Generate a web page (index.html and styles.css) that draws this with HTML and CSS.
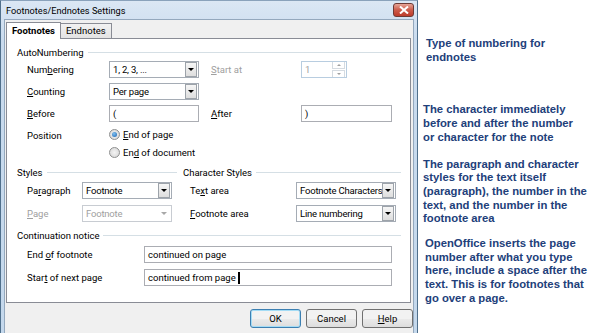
FILE: index.html
```html
<!DOCTYPE html>
<html lang="en">
<head>
  <meta charset="UTF-8">
  <title>Footnotes/Endnotes Settings</title>
  <link rel="stylesheet" href="styles.css">
</head>
<body>
<div class="page">
  <div class="window">
    <div class="titlebar">
      <span class="title">Footnotes/Endnotes Settings</span>
      <span class="close">
        <svg width="10" height="8" viewBox="0 0 10 8"><path d="M1 0.5 L9 7.5 M9 0.5 L1 7.5" stroke="#fff" stroke-width="2"/></svg>
      </span>
    </div>
    <div class="client">
      <div class="tabs">
        <div class="tab active">Footnotes</div>
        <div class="tab">Endnotes</div>
      </div>
      <div class="panel">
        <div class="legend">AutoNumbering</div>
        <div class="grid auto">
          <label>Num<u>b</u>ering</label>
          <div class="select"><span>1, 2, 3, ...</span><i class="btn"></i></div>
          <span></span>
          <label class="off"><u>S</u>tart at</label>
          <div class="spin"><span>1</span><i class="arrows"><b class="up"></b><b class="down"></b></i></div>

          <label><u>C</u>ounting</label>
          <div class="select"><span>Per page</span><i class="btn"></i></div>
          <span></span><span></span><span></span>

          <label><u>B</u>efore</label>
          <div class="input">(</div>
          <span></span>
          <label><u>A</u>fter</label>
          <div class="input">)</div>
        </div>
        <div class="radios">
          <label>Position</label>
          <div class="radio-list">
            <div class="radio on"><i></i><span><u>E</u>nd of page</span></div>
            <div class="radio"><i></i><span>En<u>d</u> of document</span></div>
          </div>
        </div>

        <div class="legend-row">
          <div class="legend styles">Styles</div>
          <div class="legend chars">Character Styles</div>
        </div>
        <div class="grid style">
          <label>Pa<u>r</u>agraph</label>
          <div class="select"><span>Footnote</span><i class="btn"></i></div>
          <span></span>
          <label>Te<u>x</u>t area</label>
          <div class="select"><span>Footnote Characters</span><i class="btn"></i></div>

          <label class="off"><u>P</u>age</label>
          <div class="select off"><span>Footnote</span><i class="btn"></i></div>
          <span></span>
          <label><u>F</u>ootnote area</label>
          <div class="select"><span>Line numbering</span><i class="btn"></i></div>
        </div>

        <div class="legend cont">Continuation notice</div>
        <div class="grid notice">
          <label>End <u>o</u>f footnote</label>
          <div class="input">continued on page</div>
          <label>Star<u>t</u> of next page</label>
          <div class="input"><span>continued from page&nbsp;</span><b class="caret"></b></div>
        </div>
      </div>
      <div class="buttons">
        <button class="default">OK</button>
        <button>Cancel</button>
        <button><u>H</u>elp</button>
      </div>
    </div>
  </div>

  <div class="notes">
    <p class="n1">Type of numbering for endnotes</p>
    <p class="n2">The character immediately before and after the number or character for the note</p>
    <p class="n3">The paragraph and character styles for the text itself (paragraph), the number in the text, and the number in the footnote area</p>
    <p class="n4">OpenOffice inserts the page number after what you type here, include a space after the text. This is for footnotes that go over a page.</p>
  </div>
</div>
</body>
</html>
```

FILE: styles.css
```css
body { margin: 0; background: #fff; font-family: Roboto, 'Noto Sans', sans-serif; font-size: 9.5px; color: #000; }
.page { display: flex; width: 600px; height: 333px; overflow: hidden; }

/* dialog window */
.window { width: 418px; height: 340px; box-sizing: border-box; border: 1px solid #50708c; border-top-color: #8aa2bb; background: linear-gradient(#dbe7f4, #c9dbee 40px, #c4d8ec); padding: 0 3px; flex: none; }
.titlebar { height: 18px; display: flex; align-items: center; padding-left: 2px; }
.title { flex: 1; font-size: 9.2px; }
.close { width: 19px; height: 12px; margin-top: -1px; border: 1px solid #6d3a35; border-radius: 3px; background: linear-gradient(#e7a597, #cc5b4a 50%, #bd3b2a); display: flex; align-items: center; justify-content: center; }
.client { background: #f0f0f0; border: 1px solid #94a8bd; height: 330px; box-sizing: border-box; padding: 1px 0 0 1px; }

/* tabs */
.tabs { display: flex; align-items: flex-end; height: 17px; }
.tab { height: 14px; line-height: 13px; padding: 0 5px; border: 1px solid #898c95; border-bottom: none; border-left: none; background: linear-gradient(#f2f2f2, #e3e3e3); }
.tab.active { height: 16px; line-height: 15px; padding: 0 5px; border-left: 1px solid #898c95; background: #fff; font-weight: bold; position: relative; top: 1px; }
.panel { width: 405px; height: 265px; box-sizing: border-box; background: #fff; border: 1px solid #898c95; padding: 6px 9px 0 10px; }

/* group titles */
.legend { display: flex; align-items: center; height: 14px; }
.legend::after { content: ""; flex: 1; border-top: 1px solid #d5dfe5; margin-left: 4px; }
.legend-row { display: flex; margin-top: 6px; }
.legend.styles { width: 160px; }
.legend.chars { flex: 1; margin-left: 6px; }
.legend.cont { margin-top: 6px; }

/* control grids */
.grid { display: grid; align-items: center; padding-left: 10px; }
.grid label, .radios label { white-space: nowrap; }
.grid.auto { grid-template-columns: 82px 90px 12px 90px 91px; grid-template-rows: 17px 17px 17px; row-gap: 5px; margin-top: 2px; }
.grid.style { grid-template-columns: 55px 90px 18px 106px 100px; grid-template-rows: 17px 17px; row-gap: 6px; margin-top: 3px; }
.grid.notice { grid-template-columns: 117px 248px; grid-template-rows: 17px 17px; row-gap: 6px; margin-top: 4px; }
.off { color: #a0a0a0; }

.select, .input, .spin { height: 17px; box-sizing: border-box; border: 1px solid #a5acb5; background: #fff; display: flex; align-items: center; padding-left: 3px; white-space: nowrap; overflow: hidden; }
.select span { flex: 1; min-width: 0; overflow: hidden; letter-spacing: -0.2px; }
.select .btn { width: 10px; height: 13px; margin-right: 1px; border: 1px solid #9da3aa; background: linear-gradient(#f6f6f6, #dedede); display: flex; align-items: center; justify-content: center; flex: none; }
.select .btn::after { content: ""; border: 3px solid transparent; border-top: 3px solid #000; border-bottom: none; }
.select.off { border-color: #c8ccd2; }
.select.off .btn { border-color: #fff; background: #fff; }
.select.off .btn::after { border-top-color: #a8a8a8; }
.input { border-color: #abadb3; }
.caret { display: inline-block; width: 2px; height: 12px; background: #000; }

.spin { border-color: #b8cde0; color: #a0a0a0; width: 46px; padding-right: 1px; }
.spin span { flex: 1; }
.spin .arrows { display: flex; flex-direction: column; gap: 1px; }
.spin .arrows b { width: 11px; height: 6px; border: 1px solid #d5dbe1; display: flex; align-items: center; justify-content: center; }
.spin .up::after { content: ""; border: 2px solid transparent; border-bottom: 2px solid #a0a0a0; border-top: none; }
.spin .down::after { content: ""; border: 2px solid transparent; border-top: 2px solid #a0a0a0; border-bottom: none; }

/* radio buttons */
.radios { display: flex; padding-left: 10px; margin-top: 5px; }
.radios label { width: 82px; line-height: 14px; margin-top: 2px; }
.radio-list { display: flex; flex-direction: column; gap: 4px; }
.radio { display: flex; align-items: center; height: 14px; }
.radio i { width: 11px; height: 11px; box-sizing: border-box; border: 1px solid #8e8f8f; border-radius: 50%; background: radial-gradient(#f4f4f4, #d4d4d4); margin-right: 3px; display: flex; align-items: center; justify-content: center; }
.radio.on i::after { content: ""; width: 5px; height: 5px; border-radius: 50%; background: radial-gradient(circle at 40% 35%, #7fc0f0, #1a62b0); }

/* buttons */
.buttons { display: flex; justify-content: flex-end; gap: 5px; margin-top: 6px; }
.buttons button { width: 51px; height: 19px; font: inherit; border: 1px solid #707070; border-radius: 3px; background: linear-gradient(#f2f2f2 50%, #ebebeb 50%, #dddddd); padding: 0; }
.buttons button.default { border-color: #3c7fb1; box-shadow: inset 0 0 0 1px #a4dcf5; }

/* annotations */
.notes { padding-left: 5px; font-family: 'Liberation Sans', Arial, sans-serif; font-weight: bold; font-size: 11.3px; line-height: 13.7px; color: #22407a; }
.notes p { margin: 0; width: 168px; }
.n1 { margin-top: 37px !important; padding-left: 3px; width: 130px !important; }
.n2 { margin-top: 39px !important; width: 155px !important; }
.n3 { margin-top: 13px !important; }
.n4 { margin-top: 11px !important; padding-left: 2px; }
```
